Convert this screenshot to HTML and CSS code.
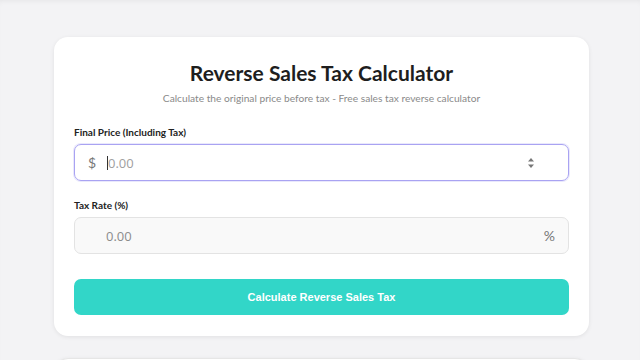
FILE: index.html
```html
<!DOCTYPE html>
<html lang="en">
<head>
    <meta charset="UTF-8">
    <meta name="viewport" content="width=device-width, initial-scale=1.0">
    <title>Reverse Sales Tax Calculator</title>
    <link rel="stylesheet" href="styles.css">
</head>
<body>
    <div class="page">
        <div class="card calculator">
            <h1 class="title">Reverse Sales Tax Calculator</h1>
            <p class="subtitle">Calculate the original price before tax - Free sales tax reverse calculator</p>

            <div class="field">
                <label class="field-label" for="finalPrice">Final Price (Including Tax)</label>
                <div class="input-wrap focused">
                    <span class="prefix">$</span>
                    <span class="caret"></span>
                    <input id="finalPrice" class="input" type="text" placeholder="0.00">
                    <span class="spinner">
                        <svg width="8" height="12" viewBox="0 0 8 12">
                            <path d="M4 1 L7 4.5 H1 Z" fill="#777"/>
                            <path d="M4 11 L7 7.5 H1 Z" fill="#777"/>
                        </svg>
                    </span>
                </div>
            </div>

            <div class="field">
                <label class="field-label" for="taxRate">Tax Rate (%)</label>
                <div class="input-wrap muted">
                    <input id="taxRate" class="input rate" type="text" placeholder="0.00">
                    <span class="suffix">%</span>
                </div>
            </div>

            <button class="calc-button">Calculate Reverse Sales Tax</button>
        </div>

        <div class="card next-card"></div>
    </div>
</body>
</html>
```

FILE: styles.css
```css
* {
    margin: 0;
    padding: 0;
    box-sizing: border-box;
}

body {
    background: #f3f3f5;
    font-family: Lato, "Open Sans", sans-serif;
    color: #222;
    overflow: hidden;
}

.page {
    padding: 37px 51px 0 54px;
    border-top: 3px solid #e6e6e9;
    margin-top: -3px;
    box-shadow: inset 0 4px 6px -4px rgba(0, 0, 0, 0.08);
}

.card {
    background: #fff;
    border-radius: 14px;
    box-shadow: 0 1px 4px rgba(0, 0, 0, 0.08);
}

.calculator {
    padding: 22px 20px 21px;
}

.title {
    font-size: 21px;
    font-weight: 700;
    text-align: center;
    line-height: 28px;
    color: #1e1e1e;
}

.subtitle {
    margin-top: 3px;
    font-size: 10.2px;
    text-align: center;
    color: #8a8a8a;
    line-height: 16px;
}

.field {
    margin-top: 19px;
}

.field + .field {
    margin-top: 17px;
}

.field-label {
    display: block;
    font-size: 10px;
    font-weight: 700;
    color: #222;
    line-height: 14px;
    margin-bottom: 5px;
}

.input-wrap {
    display: flex;
    align-items: center;
    height: 37px;
    border: 1px solid #e3e3e3;
    border-radius: 7px;
    padding: 0 13px;
}

.input-wrap.focused {
    border: 1.5px solid #a9a3f2;
    box-shadow: 0 0 0 1px rgba(169, 163, 242, 0.25);
}

.input-wrap.muted {
    background: #f9f9f9;
}

.prefix {
    font-size: 14px;
    color: #777;
    width: 19px;
}

.caret {
    width: 1px;
    height: 14px;
    background: #333;
}

.input {
    flex: 1;
    border: none;
    outline: none;
    background: transparent;
    font-family: "Open Sans", sans-serif;
    font-size: 13px;
    color: #222;
}

.input::placeholder {
    color: #a0a0a0;
}

.input.rate {
    padding-left: 18px;
}

.input.rate::placeholder {
    color: #8c8c8c;
}

.spinner {
    display: flex;
    margin-right: 20px;
}

.suffix {
    font-size: 14px;
    color: #777;
    margin-right: 0;
}

.calc-button {
    display: block;
    width: 100%;
    height: 36px;
    margin-top: 25px;
    border: none;
    border-radius: 7px;
    background: #32d6c8;
    color: #fff;
    font-family: "Liberation Sans", Arial, sans-serif;
    font-size: 11px;
    font-weight: 700;
}

.next-card {
    margin-top: 22px;
    height: 60px;
    border: 1px solid #e6e6e6;
}
```
